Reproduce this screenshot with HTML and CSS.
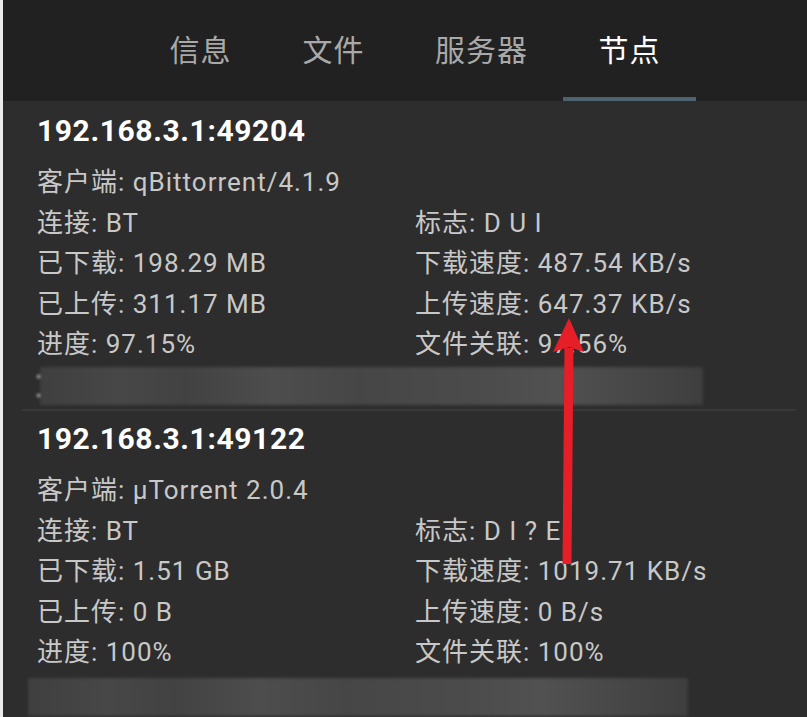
FILE: index.html
```html
<!DOCTYPE html>
<html lang="zh">
<head>
<meta charset="utf-8">
<title>节点</title>
<link rel="stylesheet" href="styles.css">
</head>
<body>
<div class="screen">
  <header class="tabs">
    <div class="tab">信息</div>
    <div class="tab">文件</div>
    <div class="tab">服务器</div>
    <div class="tab active">节点</div>
  </header>
  <main class="peers">
    <section class="peer">
      <h2 class="addr">192.168.3.1:49204</h2>
      <div class="full">客户端: qBittorrent/4.1.9</div>
      <div class="grid">
        <div>连接: BT</div><div>标志: D U I</div>
        <div>已下载: 198.29 MB</div><div>下载速度: 487.54 KB/s</div>
        <div>已上传: 311.17 MB</div><div>上传速度: 647.37 KB/s</div>
        <div>进度: 97.15%</div><div>文件关联: 97.56%</div>
      </div>
      <div class="blur b1"><span class="speck s1"></span><span class="speck s2"></span></div>
    </section>
    <section class="peer second">
      <h2 class="addr">192.168.3.1:49122</h2>
      <div class="full">客户端: µTorrent 2.0.4</div>
      <div class="grid">
        <div>连接: BT</div><div>标志: D I ? E</div>
        <div>已下载: 1.51 GB</div><div>下载速度: 1019.71 KB/s</div>
        <div>已上传: 0 B</div><div>上传速度: 0 B/s</div>
        <div>进度: 100%</div><div>文件关联: 100%</div>
      </div>
      <div class="blur b2"></div>
    </section>
  </main>
  <svg class="arrow" width="40" height="250" viewBox="0 0 40 250">
    <path d="M19 246 L21 30" stroke="#e61e28" stroke-width="9" fill="none"/>
    <path d="M21 0 L36 34 L21 29 L5 34 Z" fill="#e61e28"/>
  </svg>
</div>
</body>
</html>
```
FILE: styles.css
```css
html, body {
  margin: 0;
  padding: 0;
  background: #2d2d2d;
}
.screen {
  position: relative;
  width: 804px;
  height: 717px;
  border-left: 3px solid #ececec;
  background: #2d2d2d;
  overflow: hidden;
  font-family: Roboto, "Noto Sans CJK SC", sans-serif;
}
.tabs {
  height: 101px;
  background: #212121;
  display: flex;
  align-items: stretch;
  padding-left: 131px;
  box-sizing: border-box;
}
.tab {
  width: 133px;
  display: flex;
  align-items: center;
  justify-content: center;
  padding-bottom: 6px;
  color: #a9a9a9;
  font-size: 30px;
  letter-spacing: 1px;
  box-sizing: border-box;
}
.tab:nth-child(3) { width: 163px; }
.tab.active {
  color: #ffffff;
  border-bottom: 4px solid #4e636e;
  padding-bottom: 2px;
}
.peers {
  padding: 0 0 0 34px;
}
.peer {
  padding-top: 11px;
}
.peer.second {
  border-top: 2px solid #383838;
  margin-left: -15px;
  margin-right: 11px;
  padding-left: 15px;
  padding-top: 9px;
  margin-top: 4px;
}
.addr {
  margin: 0;
  color: #ffffff;
  font-size: 30px;
  font-weight: 700;
  line-height: 38px;
  letter-spacing: 0.6px;
}
.full, .grid > div {
  color: #c8c8c8;
  font-size: 26px;
  letter-spacing: 1px;
  line-height: 40.6px;
}
.full {
  margin-top: 12px;
}
.grid {
  display: grid;
  grid-template-columns: 378px 1fr;
}
.blur {
  position: relative;
  height: 38px;
  margin-top: 2px;
  background: linear-gradient(90deg, #3f3f3f 0%, #474747 12%, #424242 22%, #4d4d4d 35%, #464646 48%, #4b4b4b 66%, #515151 78%, #474747 90%, #3e3e3e 100%);
  filter: blur(1.5px);
}
.b1 {
  margin-left: 3px;
  width: 663px;
}
.b2 {
  margin-left: -9px;
  width: 660px;
  margin-top: 5px;
}
.speck {
  position: absolute;
  left: -3px;
  width: 3px;
  height: 3px;
  background: #bdbdbd;
}
.s1 { top: 8px; }
.s2 { top: 27px; }
.arrow {
  position: absolute;
  left: 545px;
  top: 318px;
}
```
